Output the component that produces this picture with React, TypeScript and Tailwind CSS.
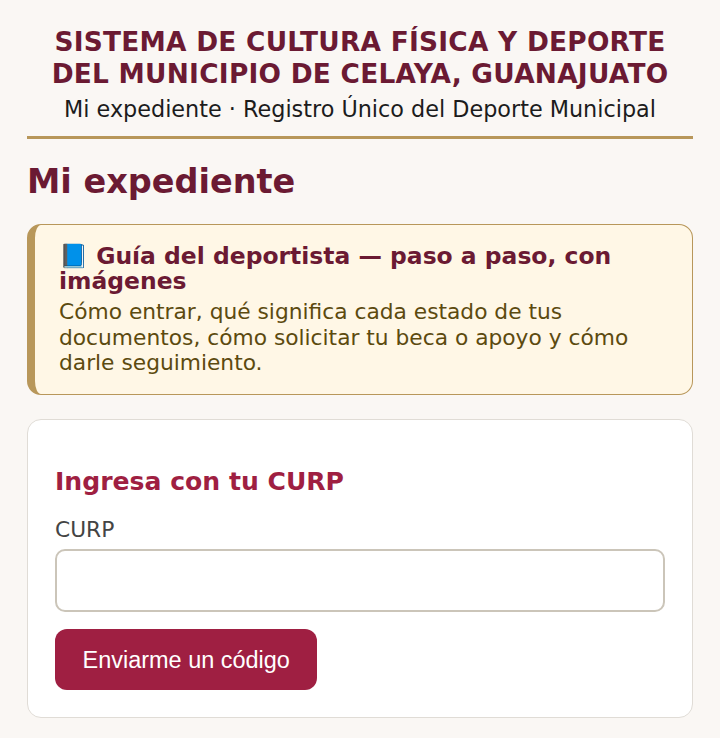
export default function App() {
  return (
    <div className="min-h-[738px] bg-[#faf7f4] px-[27px] font-['DejaVu_Sans',sans-serif] text-[#1c1c1c]">
      <header className="border-b-[3px] border-[#b8975a] pt-[26px] pb-[13px] text-center">
        <div className="text-[26.4px] leading-[32px] font-bold tracking-[0.25px] text-[#6b1a33]">
          SISTEMA DE CULTURA FÍSICA Y DEPORTE
          <br />
          DEL MUNICIPIO DE CELAYA, GUANAJUATO
        </div>
        <div className="mt-[5px] text-[22.32px] leading-[28px] text-[#1c1c1c]">
          Mi expediente · Registro Único del Deporte Municipal
        </div>
      </header>
      <h1 className="mt-[23px] text-[33.5px] leading-[40px] font-bold text-[#6b1a33]">Mi expediente</h1>
      <div className="mt-[22px] rounded-[14px] border border-[#b8975a] border-l-[8px] bg-[#fff7e6] pt-[18.5px] pr-[24px] pb-[18px] pl-[24px]">
        <div className="text-[23.44px] leading-[25.6px] font-bold text-[#6b1a33]">📘 Guía del deportista — paso a paso, con imágenes</div>
        <div className="mt-[4.3px] text-[21.76px] leading-[25.6px] text-[#5c4a0f]">
          Cómo entrar, qué significa cada estado de tus documentos, cómo solicitar tu beca o apoyo y cómo darle seguimiento.
        </div>
      </div>
      <div className="mt-[24px] rounded-[14px] border border-[#e0dcd6] bg-white px-[27px] pt-[47px] pb-[27px]">
        <h2 className="text-[25.1px] leading-[30px] font-bold text-[#9f1f42]">Ingresa con tu CURP</h2>
        <label className="mt-[19px] block text-[21.76px] leading-[28px] text-[#444444]">CURP</label>
        <input className="mt-[5px] block h-[63px] w-full rounded-[10px] border-2 border-[#cbc5b9] bg-white" />
        <button className="mt-[17px] h-[61px] rounded-[12px] bg-[#9f1f42] px-[27.5px] pt-[2px] font-['Liberation_Sans',sans-serif] text-[23.47px] text-white">
          Enviarme un código
        </button>
      </div>
    </div>
  );
}
